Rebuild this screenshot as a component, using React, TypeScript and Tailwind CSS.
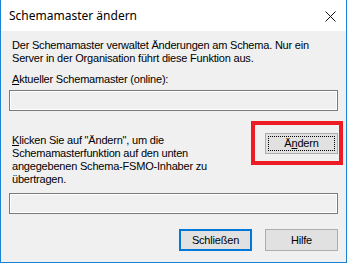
import React from 'react';

const ui = { fontFamily: '"Liberation Sans", Arial, sans-serif' };

export default function App() {
    return (
        <div className="relative w-[347px] h-[263px] bg-[#f0f0f0] border-x border-b border-[#1883d7] flex flex-col text-[11px] leading-[13px] tracking-[-0.2px] text-black" style={ui}>
            {/* title bar */}
            <div className="h-[31px] bg-white flex items-center justify-between pl-[8px] pr-[10px] shrink-0">
                <span className="text-[12px] tracking-normal text-black" style={{ fontFamily: '"Noto Sans", "Open Sans", sans-serif' }}>
                    Schemamaster ändern
                </span>
                <svg width="11" height="11" viewBox="0 0 11 11" className="mt-[1px]">
                    <path d="M0.5 0.5 L10.5 10.5 M10.5 0.5 L0.5 10.5" stroke="#111" strokeWidth="1" />
                </svg>
            </div>

            <div className="flex flex-col px-[8px]">
                <p className="mt-[8px] pl-[3px]">
                    Der Schemamaster verwaltet Änderungen am Schema. Nur ein<br />
                    Server in der Organisation führt diese Funktion aus.
                </p>
                <p className="mt-[8px] pl-[3px]">
                    <span className="underline">A</span>ktueller Schemamaster (online):
                </p>
                <div className="mt-[4px] h-[21px] border border-[#7a7a7a]">
                    <div className="h-full border border-white" />
                </div>

                <div className="mt-[22px] flex items-start justify-between">
                    <p className="pl-[3px] mt-[1px]">
                        <span className="underline">K</span>licken Sie auf "Ändern", um die<br />
                        Schemamasterfunktion auf den unten<br />
                        angegebenen Schema-FSMO-Inhaber zu<br />
                        übertragen.
                    </p>
                    <button className="w-[73px] h-[21px] border border-[#adadad] bg-[#e1e1e1] p-[2px]">
                        <div className="h-full w-full border border-dotted border-black flex items-center justify-center">
                            Ä<span className="underline">n</span>dern
                        </div>
                    </button>
                </div>

                <div className="mt-[7px] h-[21px] border border-[#7a7a7a]">
                    <div className="h-full border border-white" />
                </div>

                <div className="mt-[15px] flex justify-end gap-[13px]">
                    <button className="w-[73px] h-[22px] border-2 border-[#0078d7] bg-[#e1e1e1]">
                        Schließen
                    </button>
                    <button className="w-[73px] h-[22px] border border-[#adadad] bg-[#e1e1e1]">
                        Hilfe
                    </button>
                </div>
            </div>

            {/* red highlight annotation */}
            <div className="absolute left-[250px] top-[121px] w-[92px] h-[44px] border-4 border-[#ed1c24] pointer-events-none" />
        </div>
    );
}
